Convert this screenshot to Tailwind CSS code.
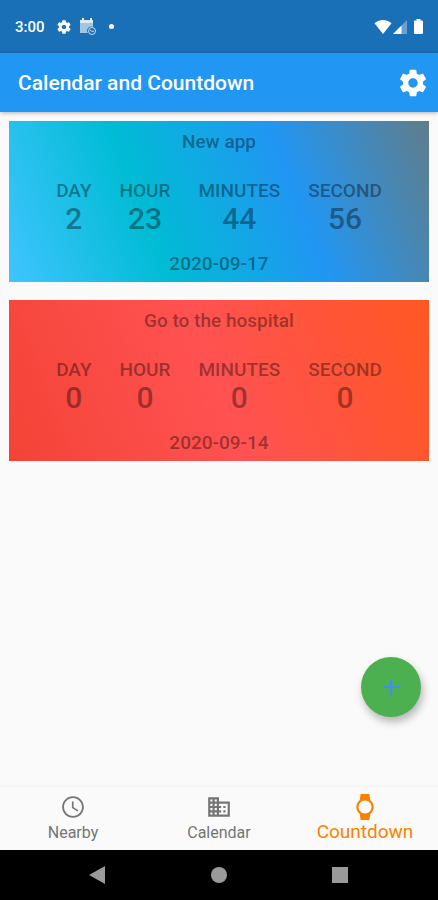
<!DOCTYPE html>
<html lang="en">
<head>
<meta charset="utf-8">
<meta name="viewport" content="width=device-width, initial-scale=1">
<title>Calendar and Countdown</title>
<script src="https://cdn.jsdelivr.net/npm/@tailwindcss/browser@4"></script>
</head>
<body class="relative flex min-h-screen flex-col bg-[#fafafa] font-[Roboto,sans-serif]">

  <!-- Status bar -->
  <div class="flex h-[53px] items-center bg-[#1a70b7] pr-[15px] pl-[15px] text-white">
    <span class="text-[15px] leading-5 font-medium">3:00</span>
    <svg class="ml-3 size-[14px]" viewBox="2 2 20 20" fill="currentColor" aria-hidden="true"><path d="M19.14 12.94c.04-.3.06-.61.06-.94 0-.32-.02-.64-.07-.94l2.03-1.58c.18-.14.23-.41.12-.61l-1.92-3.32c-.12-.22-.37-.29-.59-.22l-2.39.96c-.5-.38-1.03-.7-1.62-.94l-.36-2.54c-.04-.24-.24-.41-.48-.41h-3.84c-.24 0-.43.17-.47.41l-.36 2.54c-.59.24-1.13.57-1.62.94l-2.39-.96c-.22-.08-.47 0-.59.22L2.74 8.87c-.12.21-.08.47.12.61l2.03 1.58c-.05.3-.09.63-.09.94s.02.64.07.94l-2.03 1.58c-.18.14-.23.41-.12.61l1.92 3.32c.12.22.37.29.59.22l2.39-.96c.5.38 1.03.7 1.62.94l.36 2.54c.05.24.24.41.48.41h3.84c.24 0 .44-.17.47-.41l.36-2.54c.59-.24 1.13-.56 1.62-.94l2.39.96c.22.08.47 0 .59-.22l1.92-3.32c.12-.22.07-.47-.12-.61l-2.01-1.58zM12 15.2c-1.77 0-3.2-1.43-3.2-3.2s1.43-3.2 3.2-3.2 3.2 1.43 3.2 3.2-1.43 3.2-3.2 3.2z"/></svg>
    <svg class="ml-2 h-[18px] w-[18px]" viewBox="0 0 18 18" aria-hidden="true">
      <path fill="#fff" fill-opacity=".85" d="M1 2h2V0h2v2h6V0h2v2h1v3H1z"/>
      <path fill="#fff" fill-opacity=".6" d="M1 5h13v4a4 4 0 0 0-5 6H1z"/>
      <circle cx="13" cy="13" r="3.5" fill="none" stroke="#fff" stroke-opacity=".75"/>
      <path d="M11 12l2 1.500 2-.5" fill="none" stroke="#fff" stroke-opacity=".75"/>
    </svg>
    <span class="ml-3 size-[5px] rounded-full bg-white"></span>
    <svg class="ml-auto h-[14px] w-[18px]" viewBox="0 0 18 14" fill="currentColor" aria-hidden="true"><path d="M9 14 .5 3.300C2.500 1.300 5.500 0 9 0s6.500 1.300 8.500 3.300z"/></svg>
    <svg class="ml-px h-[14px] w-[14px]" viewBox="0 0 14 14" fill="currentColor" aria-hidden="true"><path fill-opacity=".35" d="M14 0v14H0z"/><path d="M8.500 5.500V14H0z"/></svg>
    <svg class="ml-[7px] h-[15px] w-[9px]" viewBox="0 0 9 15" fill="currentColor" aria-hidden="true"><path d="M2.500 0h4v1.500H8a1 1 0 0 1 1 1V14a1 1 0 0 1-1 1H1a1 1 0 0 1-1-1V2.500a1 1 0 0 1 1-1h1.500z"/></svg>
  </div>

  <!-- App bar -->
  <header class="flex h-[59px] items-center justify-between bg-[#2196f3] pr-[9px] pl-[18px] text-white shadow-[0_1px_4px_rgba(0,0,0,0.3)]">
    <h1 class="text-[21px] leading-7 font-medium">Calendar and Countdown</h1>
    <button type="button" aria-label="Settings" class="size-8">
      <svg class="size-8" viewBox="0 0 24 24" fill="currentColor" aria-hidden="true"><path d="M19.430 12.980c.04-.32.07-.64.07-.98s-.03-.66-.07-.98l2.110-1.650c.19-.15.24-.42.12-.64l-2-3.460c-.12-.22-.39-.3-.61-.22l-2.490 1c-.52-.4-1.080-.73-1.690-.98l-.38-2.650C14.460 2.180 14.250 2 14 2h-4c-.25 0-.46.18-.49.42l-.38 2.650c-.61.25-1.170.59-1.690.98l-2.490-1c-.23-.09-.49 0-.61.22l-2 3.460c-.13.22-.07.49.12.64l2.110 1.650c-.04.32-.07.65-.07.98s.03.66.07.98l-2.110 1.650c-.19.15-.24.42-.12.64l2 3.460c.12.22.39.3.61.22l2.490-1c.52.4 1.080.73 1.690.98l.38 2.650c.03.24.24.42.49.42h4c.25 0 .46-.18.49-.42l.38-2.650c.61-.25 1.170-.59 1.690-.98l2.490 1c.23.09.49 0 .61-.22l2-3.460c.12-.22.07-.49-.12-.64l-2.110-1.650zM12 15.500c-1.930 0-3.500-1.570-3.500-3.500s1.570-3.500 3.500-3.500 3.500 1.570 3.500 3.500-1.570 3.500-3.500 3.500z"/></svg>
    </button>
  </header>

  <!-- Countdown cards -->
  <main class="flex flex-1 flex-col gap-[18px] px-[9px] pt-[9px]">
    <section class="flex flex-col items-center bg-[linear-gradient(69deg,#40c4ff,#00bcd4,#2196f3,#607d8b)] pt-[9px] pb-[6px] text-[19px] leading-6 font-medium text-black/40">
      <h2>New app</h2>
      <dl class="mt-[25px] mb-[17px] flex gap-7 text-center">
        <div><dt>DAY</dt><dd class="text-[30px] leading-8">2</dd></div>
        <div><dt>HOUR</dt><dd class="text-[30px] leading-8">23</dd></div>
        <div><dt>MINUTES</dt><dd class="text-[30px] leading-8">44</dd></div>
        <div><dt>SECOND</dt><dd class="text-[30px] leading-8">56</dd></div>
      </dl>
      <time datetime="2020-09-17">2020-09-17</time>
    </section>
    <section class="flex flex-col items-center bg-[linear-gradient(69deg,#f44336,#ff5252,#ff5722)] pt-[9px] pb-[6px] text-[19px] leading-6 font-medium text-black/40">
      <h2>Go to the hospital</h2>
      <dl class="mt-[25px] mb-[17px] flex gap-7 text-center">
        <div><dt>DAY</dt><dd class="text-[30px] leading-8">0</dd></div>
        <div><dt>HOUR</dt><dd class="text-[30px] leading-8">0</dd></div>
        <div><dt>MINUTES</dt><dd class="text-[30px] leading-8">0</dd></div>
        <div><dt>SECOND</dt><dd class="text-[30px] leading-8">0</dd></div>
      </dl>
      <time datetime="2020-09-14">2020-09-14</time>
    </section>
  </main>

  <button type="button" aria-label="Add countdown" class="absolute right-[17px] bottom-[183px] flex size-[60px] items-center justify-center rounded-full bg-[#4caf50] text-[#448aff] shadow-[2px_5px_8px_rgba(0,0,0,0.28)]">
    <svg class="size-4" viewBox="0 0 16 16" fill="none" stroke="currentColor" stroke-width="2" aria-hidden="true"><path d="M8 0v16M0 8h16"/></svg>
  </button>

  <!-- Bottom navigation -->
  <nav class="grid h-[63px] grid-cols-3 bg-[#fafafa] text-base leading-5 text-[#757575] shadow-[0_-1px_3px_rgba(0,0,0,0.04)]">
    <a href="#nearby" class="flex flex-col items-center gap-[3px] pt-[7px]">
      <svg class="size-[26px]" viewBox="0 0 24 24" fill="currentColor" aria-hidden="true"><path d="M11.990 2C6.470 2 2 6.480 2 12s4.470 10 9.990 10C17.520 22 22 17.520 22 12S17.520 2 11.990 2zM12 20.300c-4.580 0-8.300-3.720-8.300-8.300s3.720-8.300 8.300-8.300 8.300 3.720 8.300 8.300-3.720 8.300-8.300 8.300zm.5-13.300H11v6l5.250 3.150.75-1.230-4.500-2.670z"/></svg>
      Nearby
    </a>
    <a href="#calendar" class="flex flex-col items-center gap-[3px] pt-[7px]">
      <svg class="size-[26px]" viewBox="0 0 24 24" fill="currentColor" aria-hidden="true"><path d="M12 7V3H2v18h20V7H12zM6 19H4v-2h2v2zm0-4H4v-2h2v2zm0-4H4V9h2v2zm0-4H4V5h2v2zm4 12H8v-2h2v2zm0-4H8v-2h2v2zm0-4H8V9h2v2zm0-4H8V5h2v2zm10 12h-8v-2h2v-2h-2v-2h2v-2h-2V9h8v10zm-2-8h-2v2h2v-2zm0 4h-2v2h2v-2z"/></svg>
      Calendar
    </a>
    <a href="#countdown" aria-current="page" class="flex flex-col items-center gap-[2px] pt-[7px] text-[19px] leading-5 text-[#fb8200]">
      <svg class="size-[26px]" viewBox="0 0 24 24" fill="currentColor" aria-hidden="true"><path d="M20 12c0-2.540-1.190-4.810-3.040-6.270L16 0H8l-.95 5.730C5.190 7.190 4 9.450 4 12s1.190 4.810 3.050 6.270L8 24h8l.96-5.730C18.810 16.810 20 14.540 20 12zM6 12c0-3.310 2.690-6 6-6s6 2.690 6 6-2.690 6-6 6-6-2.690-6-6z"/></svg>
      Countdown
    </a>
  </nav>

  <!-- System navigation -->
  <div class="flex h-[50px] items-center justify-center gap-[105px] bg-black text-[#9a9a9a]">
    <button type="button" aria-label="Back" class="size-4"><svg class="size-4 overflow-visible" viewBox="0 0 16 16" fill="currentColor" aria-hidden="true"><path d="M15-1v18L-1 8z"/></svg></button>
    <button type="button" aria-label="Home" class="size-4 rounded-full bg-current"></button>
    <button type="button" aria-label="Recent apps" class="size-4 bg-current"></button>
  </div>
</body>
</html>
